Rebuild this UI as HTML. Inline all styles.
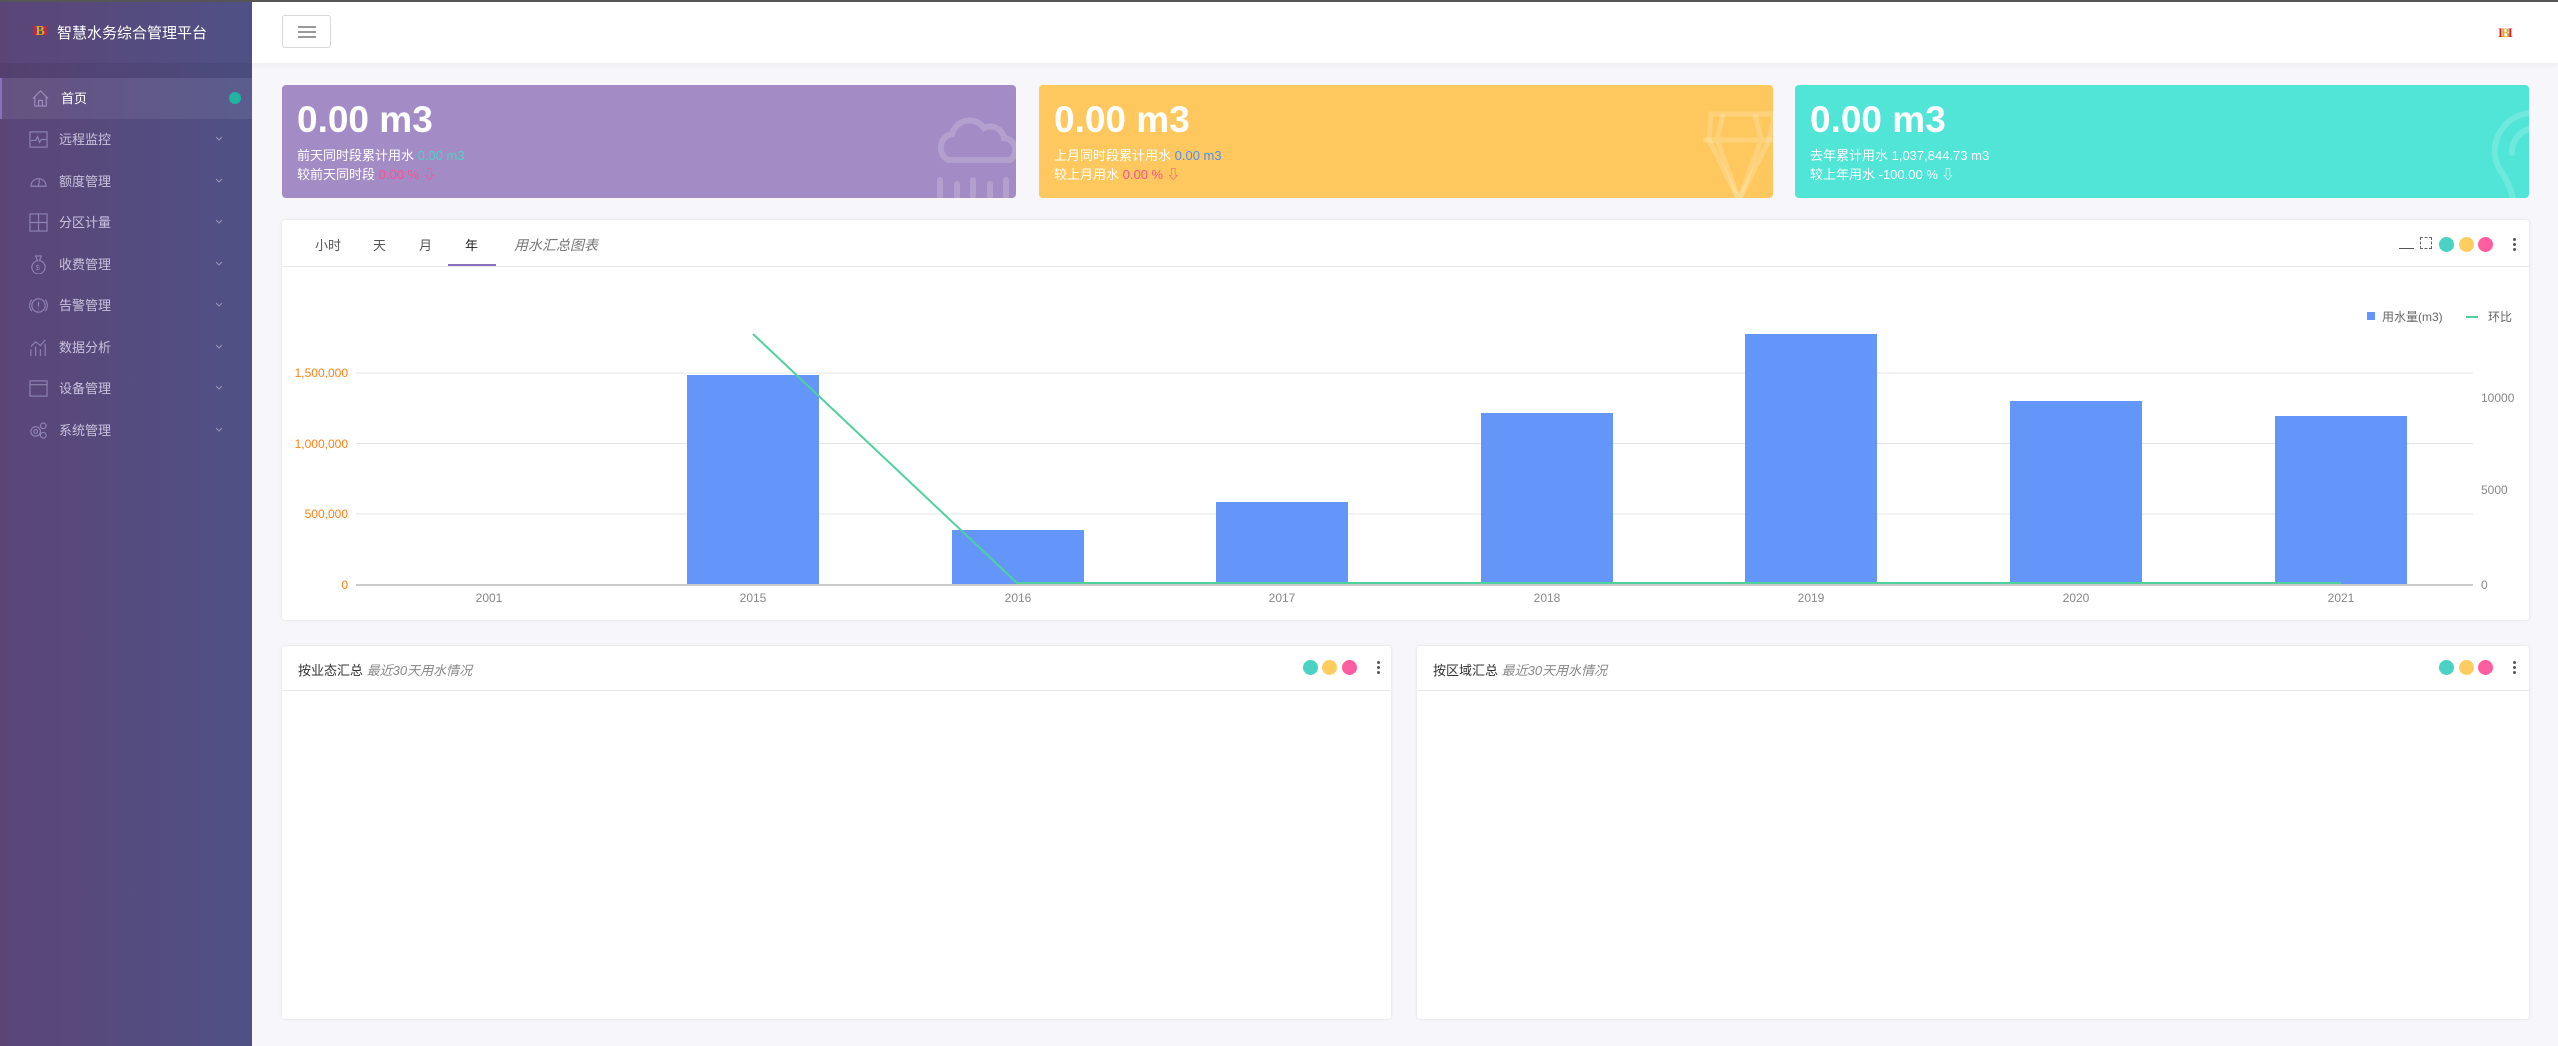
<!DOCTYPE html>
<html><head><meta charset="utf-8"><style>
*{margin:0;padding:0;box-sizing:border-box}
body{width:2558px;height:1046px;overflow:hidden;background:#f7f6fa;font-family:"Liberation Sans","Noto Sans CJK SC",sans-serif;position:relative}
.topline{position:absolute;left:0;top:0;width:2558px;height:2px;background:#555;z-index:5}
.side{position:absolute;left:0;top:0;width:252px;height:1046px;background:linear-gradient(90deg,#5b4577,#4f5186)}
.band{position:absolute;left:0;top:63px;width:252px;height:15px;background:rgba(0,0,0,0.06)}
.logo{position:absolute;left:57px;top:22px;color:#fff;font-size:15px}
.lg{position:absolute;left:32px;top:24px;width:18px;height:16px;color:#d8203a;font:bold 14px "Liberation Serif",serif;letter-spacing:-2px}
.mi{position:absolute;left:0;width:252px;height:41px;color:#c9c2dc;font-size:13px;line-height:41px}
.mi .t{position:absolute;left:59px}
.mi .ic{position:absolute;left:29px;top:11px;width:19px;height:19px}
.mi .ch{position:absolute;left:215px;top:17px;width:8px;height:6px}
.act{background:rgba(255,255,255,0.07);color:#fff;border-left:2px solid #8a6fc0}
.top{position:absolute;left:252px;top:2px;width:2306px;height:61px;background:#fff;box-shadow:0 2px 6px rgba(0,0,0,0.04)}
.hb{position:absolute;left:30px;top:13px;width:49px;height:33px;border:1px solid #d8d8d8;border-radius:3px}
.hb i{position:absolute;left:15px;width:18px;height:2px;background:#999}
.card{position:absolute;top:85px;height:113px;border-radius:4px;color:#fff;overflow:hidden}
.card .big{position:absolute;left:15px;top:14px;font-size:37px;font-weight:bold}
.card .s{position:absolute;left:15px;font-size:13px}
.panel{position:absolute;background:#fff;border-radius:3px;box-shadow:0 0 3px rgba(0,0,0,0.1)}
.dot{position:absolute;width:15px;height:15px;border-radius:50%}
.vd{position:absolute;width:3px;height:3px;border-radius:50%;background:#555}
</style></head><body>
<div class="topline"></div>
<div class="side">
 <div class="band"></div>
 <div class="lg">I<span style="color:#d9a520">B</span>I</div>
 <div class="logo">智慧水务综合管理平台</div>
 <div class="mi act" style="top:78px"><svg class="ic" viewBox="0 0 20 20" fill="none" stroke="#9d8fc0" stroke-width="1.2"><path d="M2 10L10 2L18 10M4 8V18H16V8M8 18V12H12V18"/></svg><span class="t">首页</span><span style="position:absolute;left:227px;top:14px;width:12px;height:12px;border-radius:50%;background:#1fb5a0"></span></div>
 <div class="mi" style="top:119px"><svg class="ic" viewBox="0 0 20 20" fill="none" stroke="#8f84b0" stroke-width="1.2"><rect x="1" y="2" width="18" height="16"/><path d="M2 11H7L9 7L11 13L13 10H18"/></svg><span class="t">远程监控</span><svg class="ch" viewBox="0 0 8 6"><path d="M1 1L4 4L7 1" fill="none" stroke="#9c93b8"/></svg></div>
 <div class="mi" style="top:161px"><svg class="ic" viewBox="0 0 20 20" fill="none" stroke="#8f84b0" stroke-width="1.2"><path d="M2 15A8 8 0 1 1 18 15Z"/><path d="M10 15L11 8"/></svg><span class="t">额度管理</span><svg class="ch" viewBox="0 0 8 6"><path d="M1 1L4 4L7 1" fill="none" stroke="#9c93b8"/></svg></div>
 <div class="mi" style="top:202px"><svg class="ic" viewBox="0 0 20 20" fill="none" stroke="#8f84b0" stroke-width="1.2"><rect x="1" y="1" width="18" height="18"/><path d="M10 1V19M1 10H19"/></svg><span class="t">分区计量</span><svg class="ch" viewBox="0 0 8 6"><path d="M1 1L4 4L7 1" fill="none" stroke="#9c93b8"/></svg></div>
 <div class="mi" style="top:244px"><svg class="ic" viewBox="0 0 20 20" fill="none" stroke="#8f84b0" stroke-width="1.2"><path d="M7 1H13L11 6A7 7 0 1 1 9 6Z"/><text x="7" y="16" font-size="8" fill="#8f84b0" stroke="none">$</text></svg><span class="t">收费管理</span><svg class="ch" viewBox="0 0 8 6"><path d="M1 1L4 4L7 1" fill="none" stroke="#9c93b8"/></svg></div>
 <div class="mi" style="top:285px"><svg class="ic" viewBox="0 0 20 20" fill="none" stroke="#8f84b0" stroke-width="1.2"><circle cx="10" cy="10" r="7"/><path d="M3 4A9 9 0 0 0 3 16M17 4A9 9 0 0 1 17 16M10 6V11M10 13V14"/></svg><span class="t">告警管理</span><svg class="ch" viewBox="0 0 8 6"><path d="M1 1L4 4L7 1" fill="none" stroke="#9c93b8"/></svg></div>
 <div class="mi" style="top:327px"><svg class="ic" viewBox="0 0 20 20" fill="none" stroke="#8f84b0" stroke-width="1.2"><path d="M2 19V12M7 19V9M12 19V12M17 19V6M2 9L7 4L12 8L17 2"/></svg><span class="t">数据分析</span><svg class="ch" viewBox="0 0 8 6"><path d="M1 1L4 4L7 1" fill="none" stroke="#9c93b8"/></svg></div>
 <div class="mi" style="top:368px"><svg class="ic" viewBox="0 0 20 20" fill="none" stroke="#8f84b0" stroke-width="1.2"><rect x="1" y="2" width="18" height="16"/><path d="M1 6H19"/></svg><span class="t">设备管理</span><svg class="ch" viewBox="0 0 8 6"><path d="M1 1L4 4L7 1" fill="none" stroke="#9c93b8"/></svg></div>
 <div class="mi" style="top:410px"><svg class="ic" viewBox="0 0 20 20" fill="none" stroke="#8f84b0" stroke-width="1.2"><circle cx="7" cy="11" r="5"/><circle cx="7" cy="11" r="2"/><circle cx="15" cy="5" r="3"/><circle cx="15" cy="15" r="3"/></svg><span class="t">系统管理</span><svg class="ch" viewBox="0 0 8 6"><path d="M1 1L4 4L7 1" fill="none" stroke="#9c93b8"/></svg></div>
</div>
<div class="top"><div class="hb"><i style="top:10px"></i><i style="top:15px"></i><i style="top:20px"></i></div>
<div style="position:absolute;left:2246px;top:23px;color:#d8203a;font:bold 13px 'Liberation Serif',serif;letter-spacing:-2px">I<span style="color:#d9a520">B</span>I</div></div>

<div class="card" style="left:282px;width:734px;background:#a38bc5">
 <div class="big">0.00 m3</div>
 <div class="s" style="top:60px">前天同时段累计用水 <span style="color:#4fd1c5">0.00 m3</span></div>
 <div class="s" style="top:79px">较前天同时段 <span style="color:#ff4f8f">0.00 % ⇩</span></div>
 <svg style="position:absolute;left:648px;top:27px" width="90" height="90" viewBox="0 0 90 90" fill="none" stroke="rgba(255,255,255,0.18)" stroke-width="6" stroke-linecap="round"><path d="M18 48A14 14 0 0 1 22 22A18 18 0 0 1 54 16A14 14 0 0 1 74 26A12 12 0 0 1 80 48Z"/><path d="M10 68V84M27 72V86M43 68V84M60 72V86M76 68V84"/></svg>
</div>
<div class="card" style="left:1039px;width:734px;background:#fec85e">
 <div class="big">0.00 m3</div>
 <div class="s" style="top:60px">上月同时段累计用水 <span style="color:#4e8ff0">0.00 m3</span></div>
 <div class="s" style="top:79px">较上月用水 <span style="color:#ff4f8f">0.00 % ⇩</span></div>
 <svg style="position:absolute;left:660px;top:25px" width="80" height="95" viewBox="0 0 80 95" fill="none" stroke="rgba(255,255,255,0.18)" stroke-width="5"><path d="M12 4H76L70 30L40 90L10 30Z"/><path d="M4 30H76M24 4L18 30L40 90L62 30L56 4"/></svg>
</div>
<div class="card" style="left:1795px;width:734px;background:#50e5d6">
 <div class="big">0.00 m3</div>
 <div class="s" style="top:60px">去年累计用水 1,037,844.73 m3</div>
 <div class="s" style="top:79px">较上年用水 -100.00 % ⇩</div>
 <svg style="position:absolute;left:680px;top:25px" width="60" height="90" viewBox="0 0 60 90" fill="none" stroke="rgba(255,255,255,0.18)" stroke-width="6" stroke-linecap="round"><path d="M60 3A38 38 0 0 0 25 60Q33 70 38 88"/><path d="M60 18A24 24 0 0 0 37 43"/></svg>
</div>

<div class="panel" style="left:282px;top:220px;width:2247px;height:400px">
 <div style="position:absolute;left:0;top:46px;width:100%;height:1px;background:#e8e8e8"></div>
 <div style="position:absolute;top:15px;left:33px;font-size:13px;color:#555">小时</div>
 <div style="position:absolute;top:15px;left:91px;font-size:13px;color:#555">天</div>
 <div style="position:absolute;top:15px;left:137px;font-size:13px;color:#555">月</div>
 <div style="position:absolute;top:15px;left:183px;font-size:13px;color:#222">年</div>
 <div style="position:absolute;top:44px;left:166px;width:48px;height:2px;background:#8a6fc0"></div>
 <div style="position:absolute;top:15px;left:232px;font-size:14px;color:#777;font-style:italic">用水汇总图表</div>
 <div style="position:absolute;left:2117px;top:28px;width:15px;height:1px;background:#555"></div>
 <div style="position:absolute;left:2138px;top:17px;width:12px;height:12px;border:1px dashed #666"></div>
 <div class="dot" style="left:2157px;top:17px;background:#4ad2c3"></div>
 <div class="dot" style="left:2177px;top:17px;background:#ffcd5f"></div>
 <div class="dot" style="left:2196px;top:17px;background:#fe5ea0"></div>
 <div class="vd" style="left:2231px;top:18px"></div><div class="vd" style="left:2231px;top:23px"></div><div class="vd" style="left:2231px;top:28px"></div>
</div>
<svg style="position:absolute;left:0;top:0" width="2558" height="1046">
 <g font-family="Liberation Sans,Noto Sans CJK SC,sans-serif" font-size="12">
 <rect x="2367" y="312" width="8" height="8" fill="#6495f8"/><text x="2382" y="321" fill="#666">用水量(m3)</text>
 <rect x="2466" y="316" width="12" height="2" fill="#4fd19e"/><text x="2488" y="321" fill="#666">环比</text>
 <g stroke="#e4e4e4" stroke-width="1"><line x1="356" y1="373" x2="2473" y2="373"/><line x1="356" y1="443.5" x2="2473" y2="443.5"/><line x1="356" y1="514" x2="2473" y2="514"/></g>
 <g fill="#ff7f15" text-anchor="end"><text x="348" y="377">1,500,000</text><text x="348" y="448">1,000,000</text><text x="348" y="518">500,000</text><text x="348" y="589">0</text></g>
 <g fill="#888"><text x="2481" y="402">10000</text><text x="2481" y="494">5000</text><text x="2481" y="589">0</text></g>
 <g fill="#6495f8"><rect x="687" y="375" width="132" height="210"/><rect x="952" y="530" width="132" height="55"/><rect x="1216" y="502" width="132" height="83"/><rect x="1481" y="413" width="132" height="172"/><rect x="1745" y="334" width="132" height="251"/><rect x="2010" y="401" width="132" height="184"/><rect x="2275" y="416" width="132" height="169"/></g>
 <line x1="356" y1="585" x2="2473" y2="585" stroke="#ccc" stroke-width="2"/>
 <polyline points="753,334 1017,583 2341,583" fill="none" stroke="#4fd19e" stroke-width="2"/>
 <g fill="#888" text-anchor="middle"><text x="489" y="602">2001</text><text x="753" y="602">2015</text><text x="1018" y="602">2016</text><text x="1282" y="602">2017</text><text x="1547" y="602">2018</text><text x="1811" y="602">2019</text><text x="2076" y="602">2020</text><text x="2341" y="602">2021</text></g>
 </g>
</svg>

<div class="panel" style="left:282px;top:646px;width:1109px;height:373px">
 <div style="position:absolute;left:0;top:44px;width:100%;height:1px;background:#e8e8e8"></div>
 <div style="position:absolute;left:16px;top:14px;font-size:13px;color:#333">按业态汇总 <i style="color:#888">最近30天用水情况</i></div>
 <div class="dot" style="left:1021px;top:14px;background:#4ad2c3"></div>
 <div class="dot" style="left:1040px;top:14px;background:#ffcd5f"></div>
 <div class="dot" style="left:1060px;top:14px;background:#fe5ea0"></div>
 <div class="vd" style="left:1095px;top:15px"></div><div class="vd" style="left:1095px;top:20px"></div><div class="vd" style="left:1095px;top:25px"></div>
</div>
<div class="panel" style="left:1417px;top:646px;width:1112px;height:373px">
 <div style="position:absolute;left:0;top:44px;width:100%;height:1px;background:#e8e8e8"></div>
 <div style="position:absolute;left:16px;top:14px;font-size:13px;color:#333">按区域汇总 <i style="color:#888">最近30天用水情况</i></div>
 <div class="dot" style="left:1022px;top:14px;background:#4ad2c3"></div>
 <div class="dot" style="left:1042px;top:14px;background:#ffcd5f"></div>
 <div class="dot" style="left:1061px;top:14px;background:#fe5ea0"></div>
 <div class="vd" style="left:1096px;top:15px"></div><div class="vd" style="left:1096px;top:20px"></div><div class="vd" style="left:1096px;top:25px"></div>
</div>
</body></html>
